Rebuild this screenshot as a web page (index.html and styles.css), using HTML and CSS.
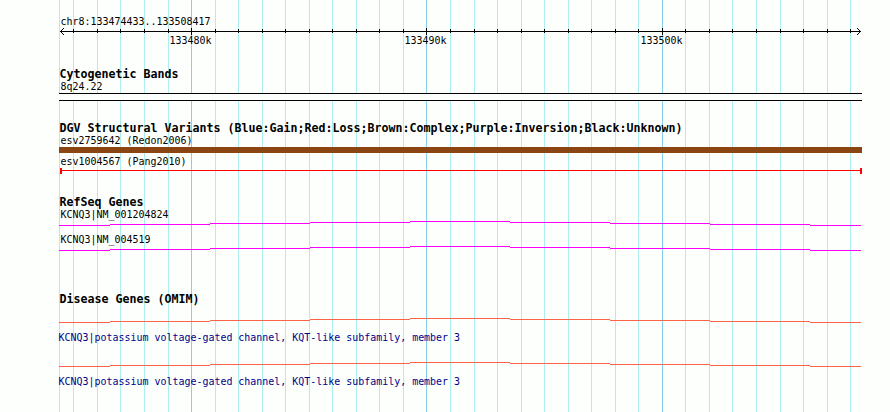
FILE: index.html
```
<!DOCTYPE html>
<html lang="en">
<head>
<meta charset="utf-8">
<title>chr8:133474433..133508417</title>
<link rel="stylesheet" href="styles.css">
</head>
<body>
<svg class="gridlines" width="890" height="412" aria-hidden="true">
  <path class="minor" d="M59.5 0v412M73.5 0v412M97.5 0v412M120.5 0v412M144.5 0v412M168.5 0v412M215.5 0v412M238.5 0v412M262.5 0v412M285.5 0v412M309.5 0v412M332.5 0v412M356.5 0v412M379.5 0v412M403.5 0v412M450.5 0v412M474.5 0v412M497.5 0v412M521.5 0v412M544.5 0v412M568.5 0v412M591.5 0v412M615.5 0v412M638.5 0v412M685.5 0v412M709.5 0v412M732.5 0v412M756.5 0v412M780.5 0v412M803.5 0v412M827.5 0v412M850.5 0v412"/>
  <path class="major" d="M191.5 0v412M426.5 0v412M662.5 0v412"/>
</svg>
<main class="browser">
  <section class="ruler">
    <p class="label">chr8:133474433..133508417</p>
    <svg class="shape axis" width="803" height="7" viewBox="59 28 803 7">
      <path d="M60 31.5H861M73.5 29v4M97.5 29v4M120.5 29v4M144.5 29v4M168.5 29v4M191.5 28v7M215.5 29v4M238.5 29v4M262.5 29v4M285.5 29v4M309.5 29v4M332.5 29v4M356.5 29v4M379.5 29v4M403.5 29v4M426.5 28v7M450.5 29v4M474.5 29v4M497.5 29v4M521.5 29v4M544.5 29v4M568.5 29v4M591.5 29v4M615.5 29v4M638.5 29v4M662.5 28v7M685.5 29v4M709.5 29v4M732.5 29v4M756.5 29v4M780.5 29v4M803.5 29v4M827.5 29v4M850.5 29v4"/>
      <path d="M61 31.5h1M61 30.5h1M62 29.5h1M63 28.5h1M61 32.5h1M62 33.5h1M63 34.5h1M859 30.5h1M858 29.5h1M857 28.5h1M859 32.5h1M858 33.5h1M857 34.5h1"/>
    </svg>
    <div class="ticks"><span class="label">133480k</span><span class="label">133490k</span><span class="label">133500k</span></div>
  </section>
  <section class="track bands">
    <h2>Cytogenetic Bands</h2>
    <p class="label">8q24.22</p>
    <div class="band"></div>
  </section>
  <section class="track variants">
    <h2>DGV Structural Variants (Blue:Gain;Red:Loss;Brown:Complex;Purple:Inversion;Black:Unknown)</h2>
    <p class="label">esv2759642 (Redon2006)</p>
    <div class="complex"></div>
    <p class="label">esv1004567 (Pang2010)</p>
    <svg class="shape loss" width="803" height="6"><path d="M1 2.5H803"/><path class="cap" d="M2 0v6M802 0v6"/></svg>
  </section>
  <section class="track refseq">
    <h2>RefSeq Genes</h2>
    <p class="label">KCNQ3|NM_001204824</p>
    <svg class="shape gene" width="803" height="5"><path d="M0 4.5H51M51 3.5H151M151 2.5H251M251 1.5H351M351 .5H451M451 1.5H551M551 2.5H651M651 3.5H751M751 4.5H802"/></svg>
    <p class="label next">KCNQ3|NM_004519</p>
    <svg class="shape gene" width="803" height="5"><path d="M0 4.5H51M51 3.5H151M151 2.5H251M251 1.5H351M351 .5H451M451 1.5H551M551 2.5H651M651 3.5H751M751 4.5H802"/></svg>
  </section>
  <section class="track omim">
    <h2>Disease Genes (OMIM)</h2>
    <svg class="shape disease" width="803" height="5"><path d="M0 4.5H51M51 3.5H151M151 2.5H251M251 1.5H351M351 .5H451M451 1.5H551M551 2.5H651M651 3.5H751M751 4.5H802"/></svg>
    <p class="label description">KCNQ3|potassium voltage-gated channel, KQT-like subfamily, member 3</p>
    <svg class="shape disease" width="803" height="5"><path d="M0 4.5H51M51 3.5H151M151 2.5H251M251 1.5H351M351 .5H451M451 1.5H551M551 2.5H651M651 3.5H751M751 4.5H802"/></svg>
    <p class="label description">KCNQ3|potassium voltage-gated channel, KQT-like subfamily, member 3</p>
  </section>
</main>
</body>
</html>
```
FILE: styles.css
```
* { box-sizing: border-box; margin: 0; padding: 0; }
html { background: #fdfffc; }
body { width: 890px; height: 412px; overflow: hidden; font-family: "DejaVu Sans Mono", "Liberation Mono", monospace; color: #000; }
.gridlines { position: absolute; top: 0; left: 0; z-index: -1; }
.gridlines path { fill: none; shape-rendering: crispEdges; }
.minor { stroke: #afeeee; }
.major { stroke: #87ceeb; }
.browser { display: flex; flex-direction: column; width: 862px; padding: 15px 0 0 59px; }
.label {
  display: block;
  height: 13px;
  padding-left: 1.6px;
  font-size: 9.967px;
  line-height: 13px;
  white-space: pre;
  transform: scaleY(1.1);
  transform-origin: 0 10px;
}
h2 { height: 12px; padding-left: 0.6px; font-size: 11.635px; line-height: 12px; font-weight: bold; white-space: pre; }
.shape { display: block; fill: none; shape-rendering: crispEdges; }
.axis { stroke: #000; }
.ticks { display: grid; grid-template-columns: 235px 236px 42px; margin: -1px 0 0 110px; }
.ticks .label { padding: 0 0 0 0.5px; }
.bands { margin-top: 21px; }
.band { height: 8px; border: solid #000; border-width: 1px 0; background: #fdfffc; }
.variants { margin-top: 21px; }
.complex { height: 6px; margin-bottom: 2px; background: #8b4513; }
.loss { stroke: #f00; }
.cap { stroke-width: 2px; }
.refseq { margin-top: 22px; }
.gene { stroke: #f0f; }
.next { margin-top: 7px; }
.omim { margin-top: 42px; }
.disease { margin-top: 13px; stroke: #ff6347; }
.description { margin: 8px 0 18px -1px; padding: 0 0 0 0.6px; color: #00008b; }
```
